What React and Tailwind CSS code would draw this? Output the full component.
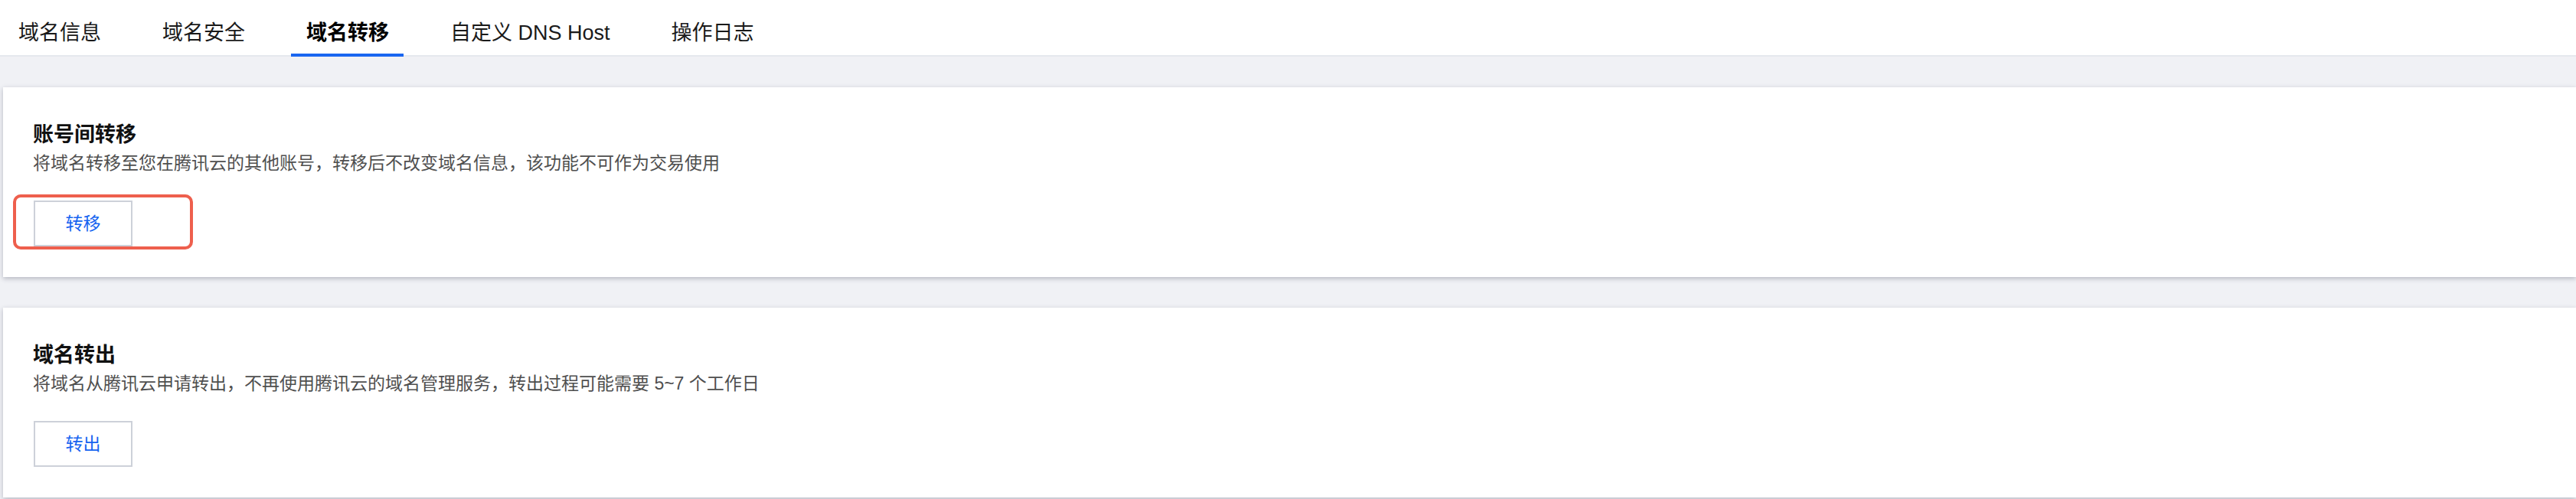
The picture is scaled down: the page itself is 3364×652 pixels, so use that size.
import React from "react";

const tabs = ["域名信息", "域名安全", "域名转移", "自定义 DNS Host", "操作日志"];
const font = { fontFamily: '"Liberation Sans", "Noto Sans CJK SC", sans-serif' };

function Card({ title, desc, btn, highlight }) {
  return (
    <div className="relative ml-[4px] h-[248px] bg-white pl-[39px] pt-[43px] shadow-[0_2px_6px_rgba(54,58,80,0.32)]">
      <div className="text-[27px] font-bold leading-[38px] text-[#111111]">{title}</div>
      <div className="mt-[1px] text-[23px] leading-[34px] text-[#4f4f4f]">{desc}</div>
      <button className="ml-[1px] mt-[32px] flex h-[60px] w-[129px] items-center justify-center border-2 border-[#cdd1d9] bg-white text-[23px] leading-[34px] text-[#1664f0]">
        {btn}
      </button>
      {highlight && (
        <div className="pointer-events-none absolute left-[13px] top-[140px] h-[72px] w-[235px] rounded-[10px] border-4 border-[#ee5f4d]" />
      )}
    </div>
  );
}

export default function App() {
  return (
    <div className="min-h-[652px] bg-[#f0f1f5]" style={font}>
      <div className="flex h-[74px] gap-[40px] border-b-2 border-[#e5e8ee] bg-white pl-[4px]">
        {tabs.map((t, i) => (
          <div
            key={t}
            className={`relative flex h-[72px] items-center pl-[20px] pr-[20px] pt-[13px] text-[27px] leading-[38px] ${
              i === 2 ? "font-bold text-black" : "text-[#1a1a1a]"
            }`}
          >
            {t}
            {i === 2 && (
              <div className="absolute bottom-[-2px] left-[0px] right-[1px] h-[4px] bg-[#1a66f0]" />
            )}
          </div>
        ))}
      </div>
      <div className="flex flex-col gap-[40px] pt-[40px]">
        <Card
          title="账号间转移"
          desc="将域名转移至您在腾讯云的其他账号，转移后不改变域名信息，该功能不可作为交易使用"
          btn="转移"
          highlight
        />
        <Card
          title="域名转出"
          desc="将域名从腾讯云申请转出，不再使用腾讯云的域名管理服务，转出过程可能需要 5~7 个工作日"
          btn="转出"
        />
      </div>
    </div>
  );
}
